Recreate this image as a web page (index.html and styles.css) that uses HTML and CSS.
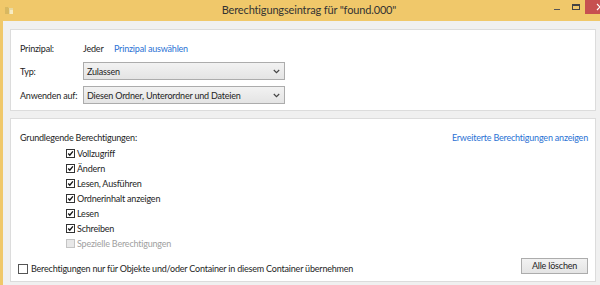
FILE: index.html
```html
<!DOCTYPE html>
<html lang="de">
<head>
<meta charset="utf-8">
<title>Berechtigungseintrag</title>
<link rel="stylesheet" href="styles.css">
</head>
<body>
<div class="window">
  <div class="titlebar">
    <div class="tb-left">
      <svg class="app-icon" width="10" height="10" viewBox="0 0 10 10">
        <path d="M1 2 L4 2 L5 3 L9 3 L9 9 L1 9 Z" fill="#e9d9a0"/>
        <path d="M1 2 L4 2 L5 3 L5 9 L1 9 Z" fill="#d8b860"/>
        <path d="M6 5 L9 5 L9 9 L6 9 Z" fill="#f7ecc4"/>
      </svg>
    </div>
    <div class="title">Berechtigungseintrag für "found.000"</div>
    <div class="tb-right">
      <span class="ctl-min"></span>
      <span class="ctl-max"></span>
      <span class="ctl-close"><svg width="15" height="14" viewBox="0 0 15 14"><path d="M12 4 L18 10 M18 4 L12 10" stroke="#fff" stroke-width="1.2"/></svg></span>
    </div>
  </div>
  <div class="content">
    <section class="panel panel-top">
      <div class="row row-principal">
        <span class="lbl">Prinzipal:</span>
        <span class="val">Jeder</span>
        <span class="link">Prinzipal auswählen</span>
      </div>
      <div class="row row-select first">
        <span class="lbl">Typ:</span>
        <div class="select">
          <span>Zulassen</span>
          <svg class="chev" width="7" height="5" viewBox="0 0 7 5"><path d="M0.8 1 L3.5 3.6 L6.2 1" fill="none" stroke="#444" stroke-width="1.2"/></svg>
        </div>
      </div>
      <div class="row row-select">
        <span class="lbl">Anwenden auf:</span>
        <div class="select">
          <span>Diesen Ordner, Unterordner und Dateien</span>
          <svg class="chev" width="7" height="5" viewBox="0 0 7 5"><path d="M0.8 1 L3.5 3.6 L6.2 1" fill="none" stroke="#444" stroke-width="1.2"/></svg>
        </div>
      </div>
    </section>
    <section class="panel panel-bottom">
      <div class="head">
        <span>Grundlegende Berechtigungen:</span>
        <span class="link">Erweiterte Berechtigungen anzeigen</span>
      </div>
      <ul class="perms">
        <li><span class="cb checked"><svg width="9" height="9" viewBox="0 0 9 9"><path d="M1.6 4.6 L3.6 6.7 L7.6 1.8" fill="none" stroke="#111" stroke-width="1.7"/></svg></span>Vollzugriff</li>
        <li><span class="cb checked"><svg width="9" height="9" viewBox="0 0 9 9"><path d="M1.6 4.6 L3.6 6.7 L7.6 1.8" fill="none" stroke="#111" stroke-width="1.7"/></svg></span>Ändern</li>
        <li><span class="cb checked"><svg width="9" height="9" viewBox="0 0 9 9"><path d="M1.6 4.6 L3.6 6.7 L7.6 1.8" fill="none" stroke="#111" stroke-width="1.7"/></svg></span>Lesen, Ausführen</li>
        <li><span class="cb checked"><svg width="9" height="9" viewBox="0 0 9 9"><path d="M1.6 4.6 L3.6 6.7 L7.6 1.8" fill="none" stroke="#111" stroke-width="1.7"/></svg></span>Ordnerinhalt anzeigen</li>
        <li><span class="cb checked"><svg width="9" height="9" viewBox="0 0 9 9"><path d="M1.6 4.6 L3.6 6.7 L7.6 1.8" fill="none" stroke="#111" stroke-width="1.7"/></svg></span>Lesen</li>
        <li><span class="cb checked"><svg width="9" height="9" viewBox="0 0 9 9"><path d="M1.6 4.6 L3.6 6.7 L7.6 1.8" fill="none" stroke="#111" stroke-width="1.7"/></svg></span>Schreiben</li>
        <li class="disabled"><span class="cb"></span>Spezielle Berechtigungen</li>
      </ul>
      <div class="foot">
        <label class="inherit"><span class="cb"></span>Berechtigungen nur für Objekte und/oder Container in diesem Container übernehmen</label>
        <button class="btn">Alle löschen</button>
      </div>
    </section>
  </div>
</div>
</body>
</html>
```

FILE: styles.css
```css
* { box-sizing: border-box; }
html, body { margin: 0; padding: 0; }
body {
  width: 600px;
  height: 285px;
  overflow: hidden;
  font-family: Lato, "Liberation Sans", sans-serif;
  font-size: 9px;
  letter-spacing: -0.2px;
  color: #1e1e1e;
  background: #f0f0f0;
}
.window {
  height: 285px;
  display: flex;
  flex-direction: column;
  border-left: 3px solid #f0c86a;
}
.titlebar {
  height: 21px;
  margin-left: -3px;
  background: #f0c86a;
  display: grid;
  grid-template-columns: 1fr auto 1fr;
  align-items: start;
}
.tb-left { padding: 5px 0 0 4px; }
.app-icon { display: block; }
.title {
  padding: 3px 0 0 18px;
  font-size: 11px;
  letter-spacing: -0.15px;
  color: #333;
  white-space: nowrap;
}
.tb-right {
  display: flex;
  justify-content: flex-end;
  align-items: flex-start;
}
.ctl-min {
  width: 6px; height: 1.5px;
  background: #555;
  margin-top: 8.5px;
  margin-right: 12px;
}
.ctl-max {
  width: 8px; height: 6px;
  border: 1px solid #444;
  border-top-width: 2px;
  margin-top: 4px;
  margin-right: 5px;
}
.ctl-close {
  width: 15px; height: 14px;
  background: #c75050;
  overflow: hidden;
}
.ctl-close svg { display: block; }
.content {
  flex: 1;
  padding: 8px 4px 3px 7px;
  display: flex;
  flex-direction: column;
  gap: 7px;
}
.panel {
  background: #fff;
  border: 1px solid #dcdcdc;
}
.panel-top {
  height: 82px;
  padding: 11px 9px 0 9px;
}
.row { display: flex; align-items: center; white-space: nowrap; }
.row-principal { height: 14px; }
.lbl { width: 63px; flex: none; white-space: nowrap; }
.val { width: 31px; }
.link { color: #2a72d4; }
.row-select.first { margin-top: 7px; }
.row-select { margin-top: 6px; }
.select {
  width: 202px;
  height: 18px;
  border: 1px solid #acacac;
  background: linear-gradient(#f2f2f2, #e4e4e4);
  display: flex;
  align-items: center;
  justify-content: space-between;
  padding: 0 4px 0 3px;
}
.chev { display: block; }
.panel-bottom {
  flex: 1;
  padding: 11px 7px 0 9px;
  display: flex;
  flex-direction: column;
}
.head {
  display: flex;
  justify-content: space-between;
  height: 14px;
  align-items: center;
  white-space: nowrap;
}
.perms {
  list-style: none;
  margin: 2px 0 0 46px;
  padding: 0;
}
.perms li {
  height: 15px;
  display: flex;
  align-items: center;
  white-space: nowrap;
}
.cb {
  width: 9px; height: 9px;
  border: 1px solid #333;
  background: #fff;
  margin-right: 2px;
  display: flex;
  align-items: center;
  justify-content: center;
  flex: none;
}
.cb svg { display: block; }
.perms li.disabled { color: #a0a0a0; }
.perms li.disabled .cb {
  border-color: #c4c4c4;
  background: #e8e8e8;
}
.foot {
  margin-top: 6px;
  display: flex;
  justify-content: space-between;
  align-items: center;
}
.inherit {
  display: flex;
  align-items: center;
  margin-left: -2px;
  margin-top: 6px;
  white-space: nowrap;
}
.inherit .cb {
  width: 10px; height: 10px;
  border-color: #555;
  margin-right: 3px;
}
.btn {
  width: 67px;
  height: 16px;
  font: inherit;
  letter-spacing: inherit;
  color: #1e1e1e;
  border: 1px solid #acacac;
  background: linear-gradient(#f2f2f2, #e4e4e4);
  padding: 0;
}
```
